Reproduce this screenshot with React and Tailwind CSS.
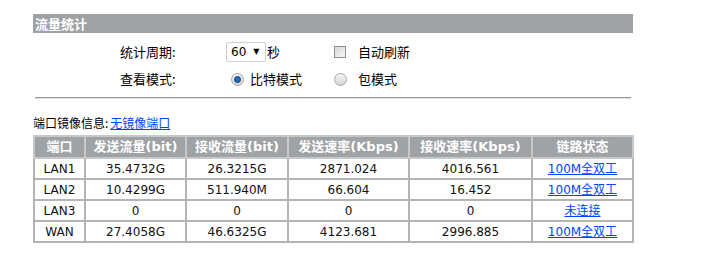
import React from "react";

const font = { fontFamily: '"DejaVu Sans", Verdana, "Noto Sans CJK SC", sans-serif' };
const cjk = { fontFamily: '"Noto Sans CJK SC", sans-serif' };

const rows = [
  ["LAN1", "35.4732G", "26.3215G", "2871.024", "4016.561", "100M全双工"],
  ["LAN2", "10.4299G", "511.940M", "66.604", "16.452", "100M全双工"],
  ["LAN3", "0", "0", "0", "0", "未连接"],
  ["WAN", "27.4058G", "46.6325G", "4123.681", "2996.885", "100M全双工"],
];

const heads = ["端口", "发送流量(bit)", "接收流量(bit)", "发送速率(Kbps)", "接收速率(Kbps)", "链路状态"];
const widths = ["w-[51px]", "w-[101px]", "w-[102px]", "w-[121px]", "w-[123px]", "w-[101px]"];

function Radio({ checked }) {
  return (
    <span className="inline-flex items-center justify-center w-[13px] h-[13px] rounded-full border border-[#a8a8a8] bg-gradient-to-b from-[#f4f4f4] to-[#d6d6d6]">
      {checked && <span className="w-[7px] h-[7px] rounded-full bg-[#1d6fc9] border border-[#0b3f7a]" />}
    </span>
  );
}

export default function App() {
  return (
    <div className="w-[725px] h-[264px] bg-white text-black relative" style={font}>
      <div className="pt-[14px] pl-[33px]">
        <div className="w-[600px] h-[19px] bg-[#9fa2a5] text-white font-bold text-[13px] leading-[19px] pl-[2px]" style={cjk}>
          流量统计
        </div>
        <div className="pl-[87px] pt-[9px] text-[13px]" style={cjk}>
          <div className="flex items-center h-[20px]">
            <span className="w-[106px]">统计周期:</span>
            <span className="flex items-center w-[40px] h-[20px] border border-[#cfcfcf] rounded-[2px] bg-white pl-[4px]" style={font}>
              <span className="text-[12px]">60</span>
              <span className="ml-[7px] text-[8px]">▼</span>
            </span>
            <span className="ml-[1px] w-[67px]">秒</span>
            <span className="w-[12px] h-[12px] border border-[#8f8f8f] bg-gradient-to-br from-[#d8d8d8] to-[#f8f8f8]" />
            <span className="ml-[12px]">自动刷新</span>
          </div>
          <div className="flex items-center h-[20px] mt-[7px]">
            <span className="w-[111px]">查看模式:</span>
            <Radio checked />
            <span className="ml-[6px] w-[84px]">比特模式</span>
            <Radio />
            <span className="ml-[11px]">包模式</span>
          </div>
        </div>
        <div className="ml-[2px] mt-[8px] w-[596px] h-[1px] bg-[#999999] border-b border-[#e0e0e0] box-content" />
        <div className="mt-[16px] text-[12px] leading-[16px]" style={cjk}>
          端口镜像信息:<a className="text-[#0044ff] underline ml-[2px]">无镜像端口</a>
        </div>
        <table className="mt-[4px] border-collapse border-2 border-[#aaaaaa] text-[12px] table-fixed w-[600px]">
          <thead>
            <tr className="h-[22px]">
              {heads.map((h, i) => (
                <th key={i} className={`${widths[i]} bg-[#a0a3a6] text-white font-bold text-[13px] border-2 border-[#c8c8c8] p-0 text-center`}>
                  {h}
                </th>
              ))}
            </tr>
          </thead>
          <tbody>
            {rows.map((r, ri) => (
              <tr key={ri} className="h-[21px]">
                {r.map((c, ci) => (
                  <td key={ci} className="border-2 border-[#b4b4b4] p-0 text-center text-[#111]">
                    {ci === 5 ? <a className="text-[#0044ff] underline">{c}</a> : c}
                  </td>
                ))}
              </tr>
            ))}
          </tbody>
        </table>
      </div>
    </div>
  );
}
